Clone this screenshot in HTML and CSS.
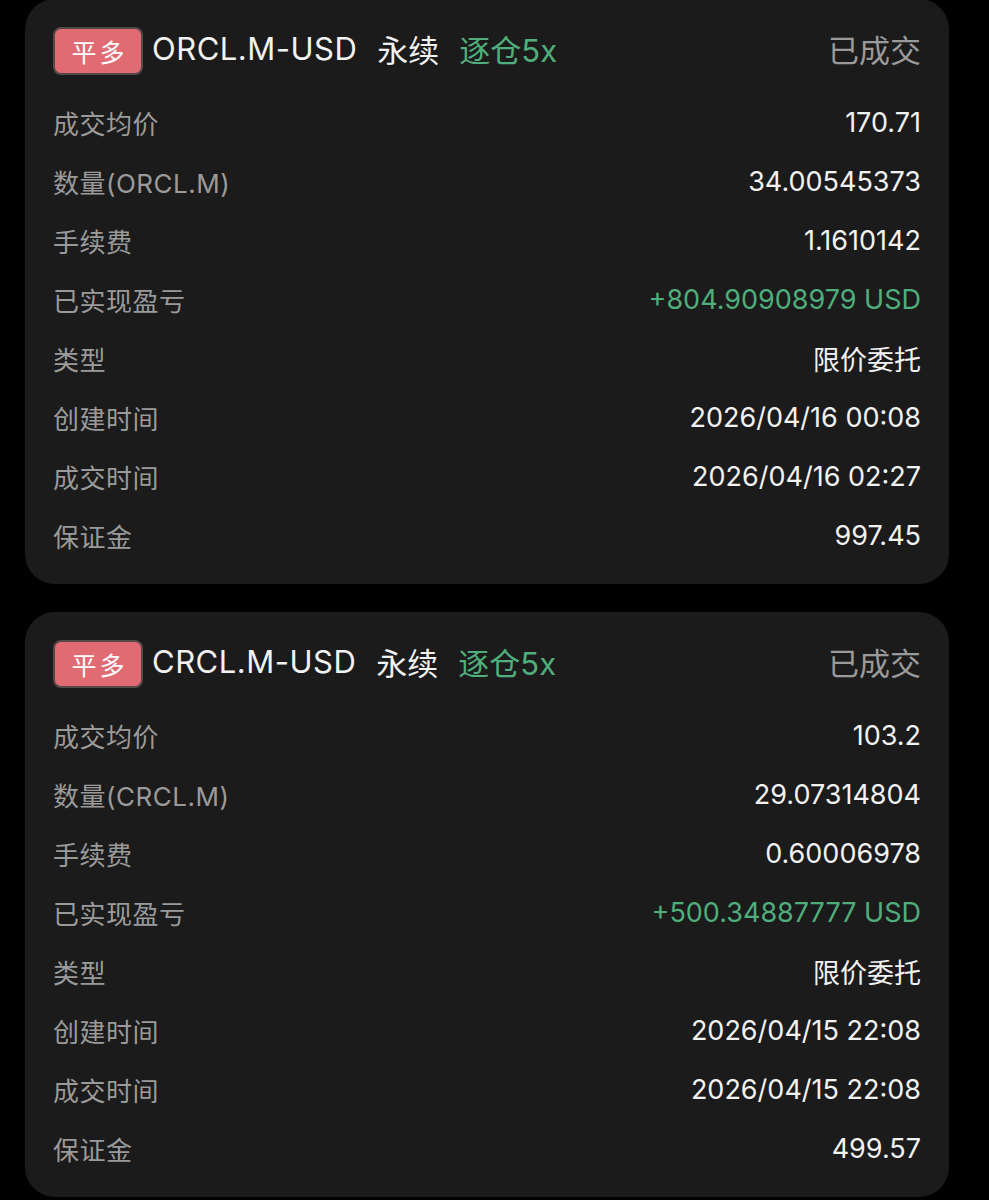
FILE: index.html
```html
<!DOCTYPE html>
<html lang="zh-CN">
<head>
  <meta charset="UTF-8">
  <meta name="viewport" content="width=device-width, initial-scale=1.0">
  <title>委托记录</title>
  <link rel="stylesheet" href="styles.css">
</head>
<body>
  <div class="list">
    <div class="card">
      <div class="card-head">
        <span class="badge">平多</span>
        <span class="symbol">ORCL.M-USD</span>
        <span class="kind">永续</span>
        <span class="margin">逐仓5x</span>
        <span class="status">已成交</span>
      </div>
      <div class="row"><span class="label">成交均价</span><span class="value">170.71</span></div>
      <div class="row"><span class="label">数量(ORCL.M)</span><span class="value">34.00545373</span></div>
      <div class="row"><span class="label">手续费</span><span class="value">1.1610142</span></div>
      <div class="row"><span class="label">已实现盈亏</span><span class="value profit">+804.90908979 USD</span></div>
      <div class="row"><span class="label">类型</span><span class="value">限价委托</span></div>
      <div class="row"><span class="label">创建时间</span><span class="value">2026/04/16 00:08</span></div>
      <div class="row"><span class="label">成交时间</span><span class="value">2026/04/16 02:27</span></div>
      <div class="row"><span class="label">保证金</span><span class="value">997.45</span></div>
    </div>

    <div class="card">
      <div class="card-head">
        <span class="badge">平多</span>
        <span class="symbol">CRCL.M-USD</span>
        <span class="kind">永续</span>
        <span class="margin">逐仓5x</span>
        <span class="status">已成交</span>
      </div>
      <div class="row"><span class="label">成交均价</span><span class="value">103.2</span></div>
      <div class="row"><span class="label">数量(CRCL.M)</span><span class="value">29.07314804</span></div>
      <div class="row"><span class="label">手续费</span><span class="value">0.60006978</span></div>
      <div class="row"><span class="label">已实现盈亏</span><span class="value profit">+500.34887777 USD</span></div>
      <div class="row"><span class="label">类型</span><span class="value">限价委托</span></div>
      <div class="row"><span class="label">创建时间</span><span class="value">2026/04/15 22:08</span></div>
      <div class="row"><span class="label">成交时间</span><span class="value">2026/04/15 22:08</span></div>
      <div class="row"><span class="label">保证金</span><span class="value">499.57</span></div>
    </div>
  </div>
</body>
</html>
```

FILE: styles.css
```css
:root {
  --bg: #000;
  --card: #1b1b1b;
  --text: #f2f2f2;
  --muted: #9a9a9a;
  --green: #4fae7c;
  --red: #e06b73;
}

* {
  margin: 0;
  padding: 0;
  box-sizing: border-box;
}

body {
  background-color: var(--bg);
  color: var(--text);
  font-family: Inter, "Noto Sans CJK SC", sans-serif;
  padding: 0 40px 0 25px;
  overflow: hidden;
}

.list {
  display: flex;
  flex-direction: column;
  gap: 28px;
  margin-top: -1px;
}

.card {
  background-color: var(--card);
  border-radius: 30px;
  height: 585px;
  padding: 28px 28px 0;
}

/* Header line */
.card-head {
  display: flex;
  align-items: center;
  height: 48px;
  margin-bottom: 18px;
  font-size: 31px;
}

.card-head span {
  margin-bottom: 5px;
}

.card-head .badge {
  display: flex;
  align-items: center;
  justify-content: center;
  width: 90px;
  height: 48px;
  border: 2px solid #55494a;
  border-radius: 8px;
  background-color: var(--red);
  color: #fff;
  font-size: 25px;
  letter-spacing: 3px;
  padding-left: 3px;
  margin: 0 9px 0 0;
}

.symbol {
  letter-spacing: 0.5px;
  margin-right: 20px;
}

.card-head .kind {
  margin-right: 20px;
}

.margin {
  color: var(--green);
}

.card-head .status {
  margin-left: auto;
  color: var(--muted);
}

/* Detail rows */
.row {
  display: flex;
  justify-content: space-between;
  align-items: center;
  height: 59px;
}

.label {
  color: var(--muted);
  font-size: 26px;
  letter-spacing: 0.5px;
}

.value {
  color: var(--text);
  font-size: 27px;
}

.profit {
  color: var(--green);
}
```
